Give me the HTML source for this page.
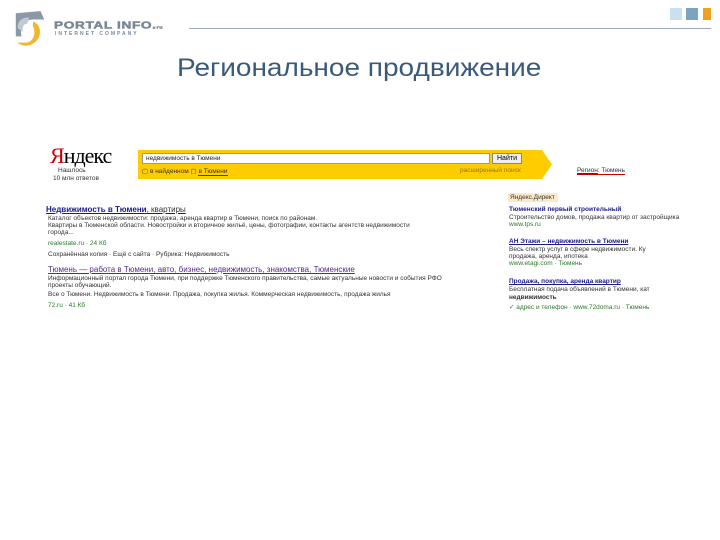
<!DOCTYPE html>
<html><head><meta charset="utf-8"><style>
*{margin:0;padding:0;box-sizing:border-box}
body{width:720px;height:540px;background:#fff;position:relative;overflow:hidden;font-family:"Liberation Sans",Arial,sans-serif}
.a{position:absolute;white-space:nowrap}
.t{font-size:6.5px;color:#333}
.l{font-size:8px;color:#1a1a8a;text-decoration:underline;font-weight:bold}
.g{font-size:6.5px;color:#2a7a2a}
</style></head><body>
<svg class="a" style="left:12px;top:9px" width="38" height="40" viewBox="0 0 40 38" preserveAspectRatio="none">
<path d="M4 4 L30 2 L34 10 L22 10 C12 10 8 18 10 26 L4 26 Z" fill="#8a98a8"/>
<path d="M6 18 C6 10 12 8 18 8 L16 14 C12 14 10 18 12 22 Z" fill="#c0cad4"/>
<path d="M22 12 C30 14 32 24 26 30 C20 36 10 36 6 32 L14 32 C22 32 26 24 22 16 Z" fill="#f2b52e"/>
</svg>
<div class="a" style="left:54px;top:19px;font-size:13px;font-weight:bold;color:#7a8896;letter-spacing:0.6px;transform:scale(1.05,0.8);transform-origin:top left;-webkit-text-stroke:0.6px #7a8896">PORTAL INFO.<span style="font-size:5px">ru</span></div>
<div class="a" style="left:55px;top:31px;font-size:5px;font-weight:bold;color:#7a8896;letter-spacing:2px">INTERNET COMPANY</div>
<div class="a" style="left:189px;top:28px;width:522px;height:1px;background:#9aaabb"></div>
<div class="a" style="left:670px;top:8px;width:12px;height:12px;background:#c8e0f0"></div>
<div class="a" style="left:686px;top:8px;width:12px;height:12px;background:#7aa4c0"></div>
<div class="a" style="left:703px;top:8px;width:8px;height:12px;background:#f0a020"></div>
<div class="a" style="left:177px;top:54px;font-size:25px;color:#3b5a7a;transform:scaleX(1.12);transform-origin:left top">Региональное продвижение</div>

<div class="a" style="left:50px;top:143px;font-size:22px;color:#cc0000;font-family:'Liberation Serif',serif;letter-spacing:-1px"><span>Я</span><span style="color:#000">ндекс</span></div>
<div class="a t" style="left:58px;top:167px">Нашлось</div>
<div class="a t" style="left:53px;top:175px">10 млн ответов</div>
<svg class="a" style="left:138px;top:150px" width="414" height="29"><path d="M0 0H404L414 14.5L404 29H0Z" fill="#ffcc00"/></svg>
<div class="a" style="left:142px;top:153px;width:348px;height:11px;background:#fff;border:1px solid #999"></div>
<div class="a t" style="left:146px;top:155px;color:#222">недвижимость в Тюмени</div>
<div class="a" style="left:492px;top:153px;width:30px;height:11px;background:#eee;border:1px solid #888;font-size:7px;text-align:center;line-height:9px">Найти</div>
<div class="a t" style="left:142px;top:167px">▢ в найденном ▢ <span style="border-bottom:1px solid #c00">в Тюмени</span></div>
<div class="a t" style="left:460px;top:167px;color:#997700">расширенный поиск</div>
<div class="a t" style="left:577px;top:167px;border-bottom:1px solid #c00"><u>Регион</u>: Тюмень</div>

<div class="a l" style="left:46px;top:205px">Недвижимость в Тюмени<span style="font-weight:normal;color:#333;text-decoration:none">, квартиры</span></div>
<div class="a t" style="left:48px;top:215px">Каталог объектов недвижимости: продажа, аренда квартир в Тюмени, поиск по районам.</div>
<div class="a t" style="left:48px;top:222px">Квартиры в Тюменской области. Новостройки и вторичное жильё, цены, фотографии, контакты агентств недвижимости</div>
<div class="a t" style="left:48px;top:229px">города...</div>
<div class="a g" style="left:48px;top:240px">realestate.ru · 24 Кб</div>
<div class="a t" style="left:48px;top:251px">Сохранённая копия · Ещё с сайта · Рубрика: Недвижимость</div>
<div class="a l" style="left:48px;top:265px;color:#552a88;font-weight:normal">Тюмень — работа в Тюмени, авто, бизнес, недвижимость, знакомства, Тюменские</div>
<div class="a t" style="left:48px;top:275px">Информационный портал города Тюмени, при поддержке Тюменского правительства, самые актуальные новости и события РФО</div>
<div class="a t" style="left:48px;top:282px">проекты обучающий.</div>
<div class="a t" style="left:48px;top:291px">Все о Тюмени. Недвижимость в Тюмени. Продажа, покупка жилья. Коммерческая недвижимость, продажа жилья</div>
<div class="a g" style="left:48px;top:302px">72.ru · 41 Кб</div>

<div class="a t" style="left:508px;top:193px;background:#fde8c8;padding:1px 2px;width:50px">Яндекс.Директ</div>
<div class="a l" style="left:509px;top:206px;font-size:6.5px;text-decoration:none">Тюменский первый строительный</div>
<div class="a t" style="left:509px;top:214px">Строительство домов, продажа квартир от застройщика</div>
<div class="a g" style="left:509px;top:221px">www.tps.ru</div>
<div class="a l" style="left:509px;top:238px;font-size:6.5px">АН Этажи – недвижимость в Тюмени</div>
<div class="a t" style="left:509px;top:246px">Весь спектр услуг в сфере недвижимости. Ку</div>
<div class="a t" style="left:509px;top:253px">продажа, аренда, ипотека</div>
<div class="a g" style="left:509px;top:260px">www.etagi.com · Тюмень</div>
<div class="a l" style="left:509px;top:278px;font-size:6.5px">Продажа, покупка, аренда квартир</div>
<div class="a t" style="left:509px;top:286px">Бесплатная подача объявлений в Тюмени, кат</div>
<div class="a t" style="left:509px;top:294px;font-weight:bold">недвижимость</div>
<div class="a g" style="left:509px;top:303px">✓ адрес и телефон · www.72doma.ru · Тюмень</div>
</body></html>
